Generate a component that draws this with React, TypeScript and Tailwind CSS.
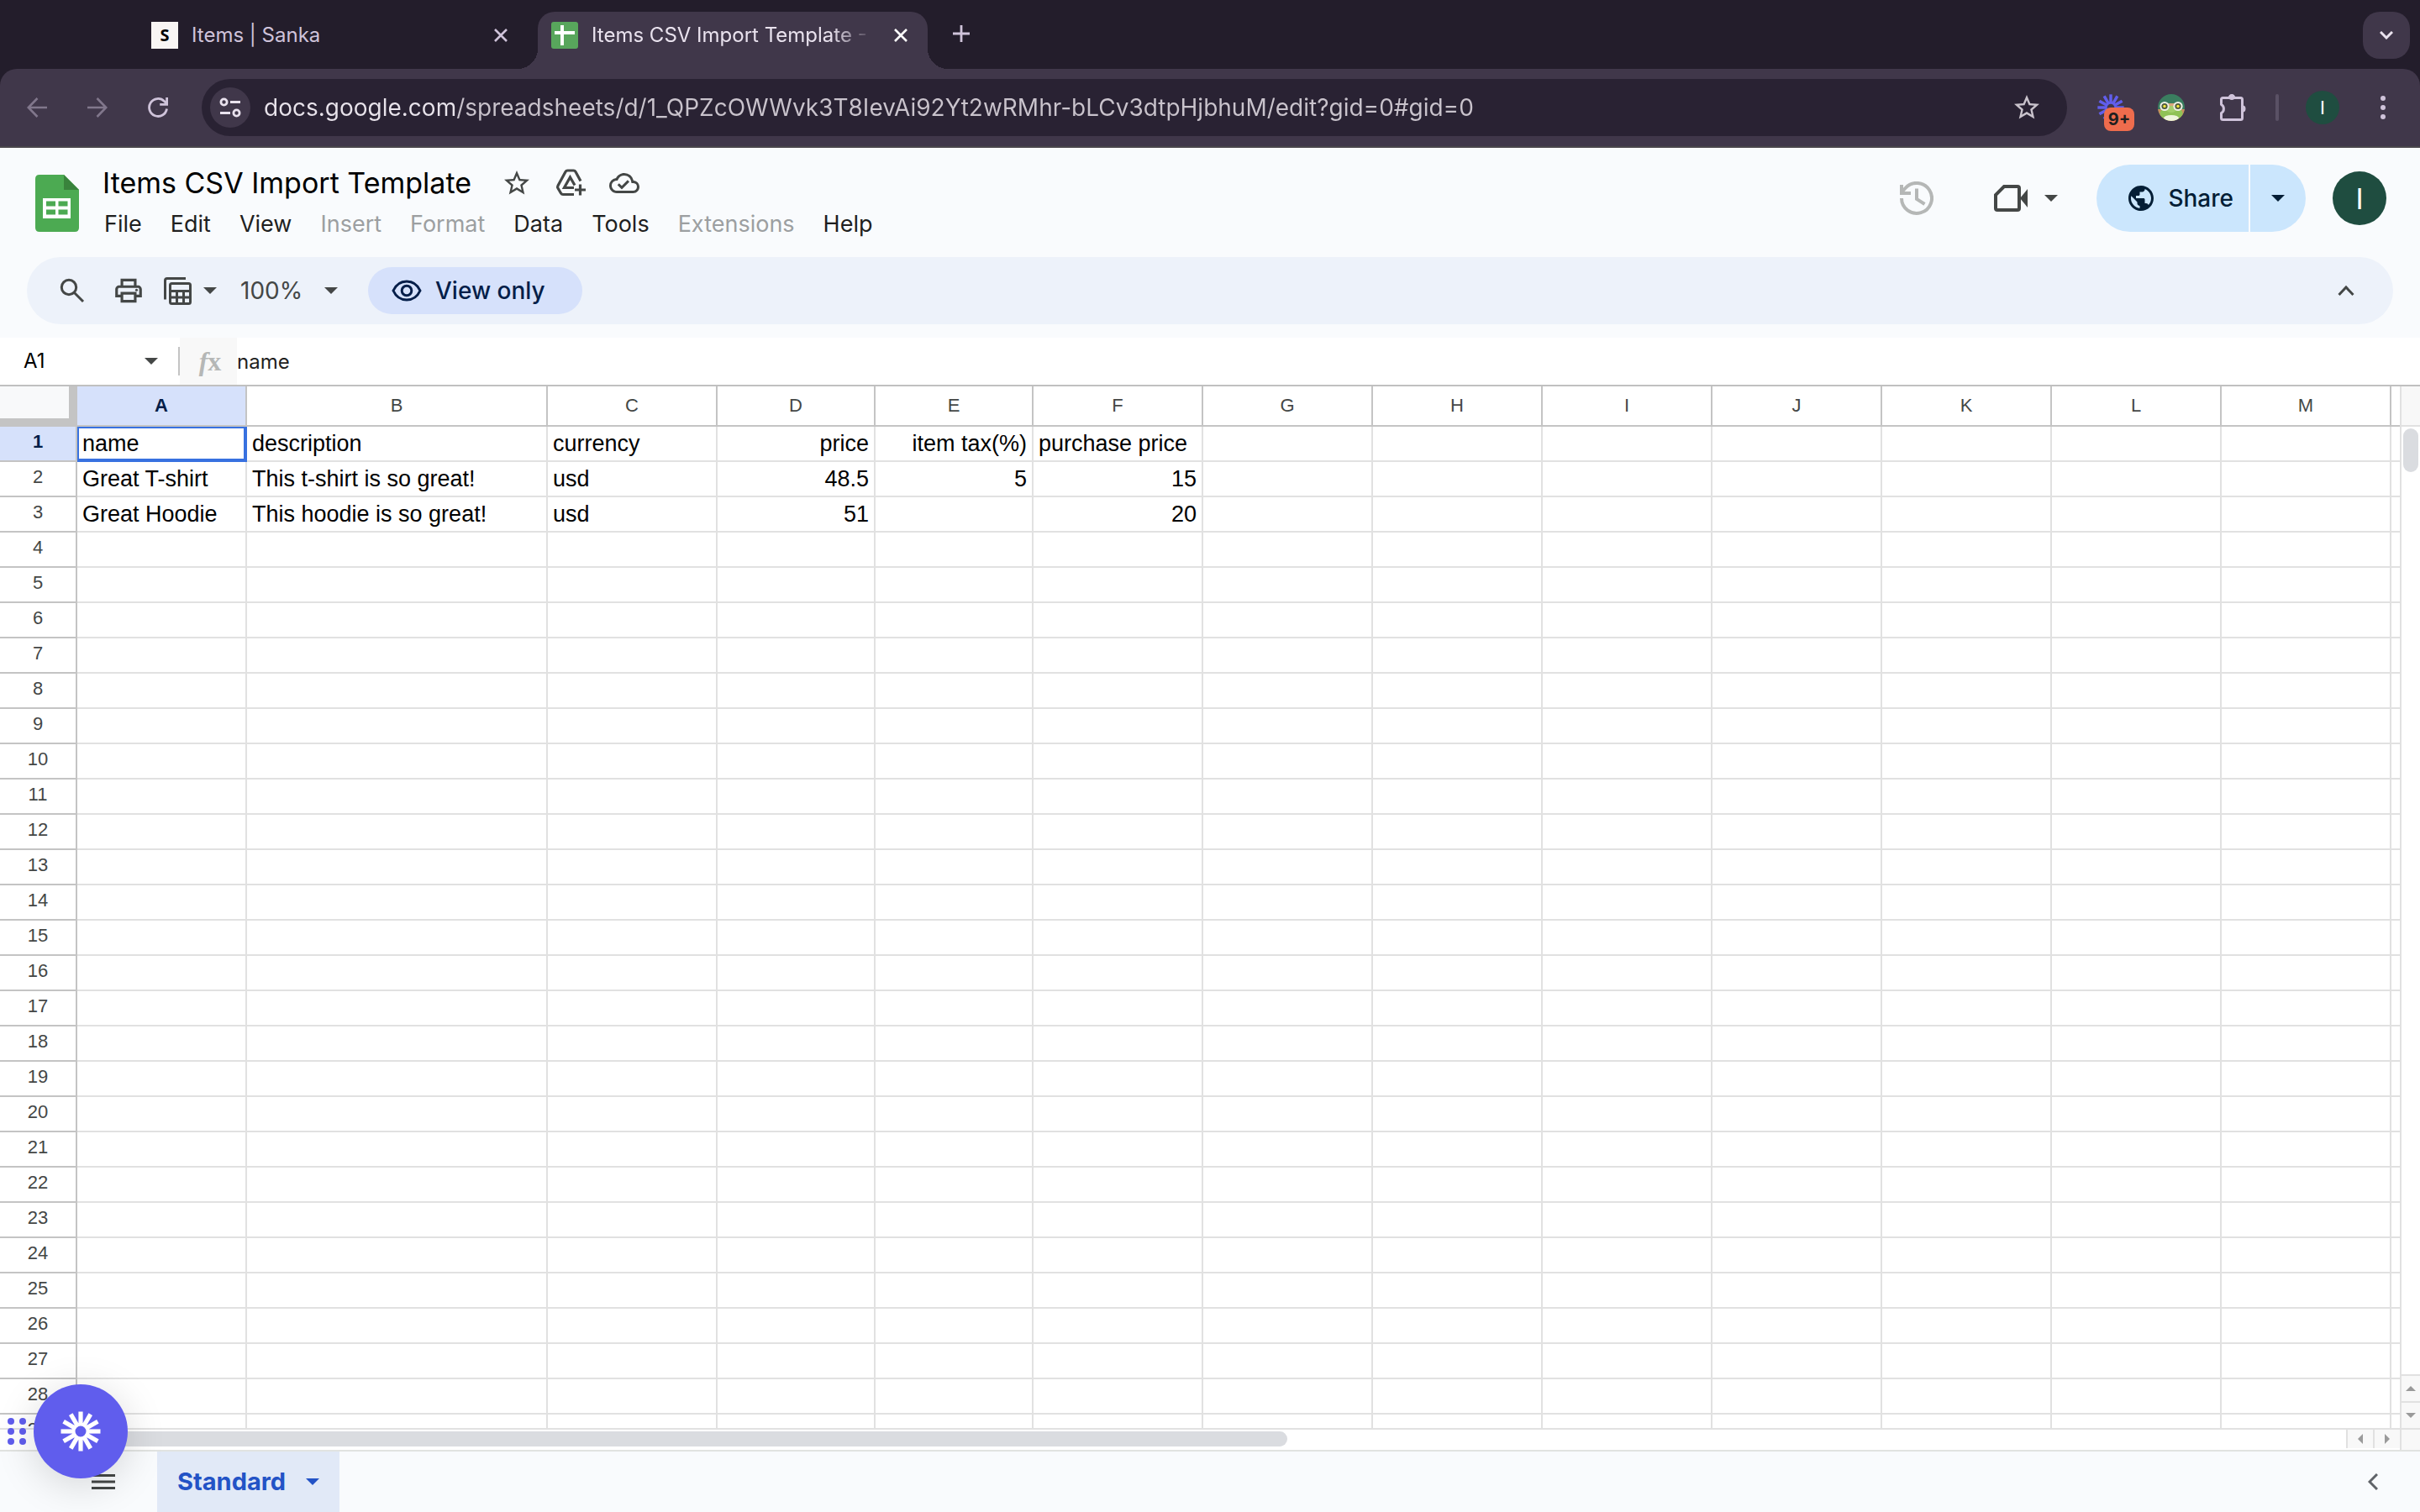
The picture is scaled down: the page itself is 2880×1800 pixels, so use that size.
import { useState, type ReactNode } from 'react'
import { clsx } from 'clsx'
import { MdStarBorder, MdOutlineCloudDone, MdOutlinePrint, MdPublic } from 'react-icons/md'

const COLUMNS = ['A', 'B', 'C', 'D', 'E', 'F', 'G', 'H', 'I', 'J', 'K', 'L', 'M']

const COLUMN_WIDTHS: Record<string, string> = {
  B: 'w-[358px]',
  D: 'w-[188px]',
  E: 'w-[188px]',
}

const ROW_COUNT = 29

const SHEET: string[][] = [
  ['name', 'description', 'currency', 'price', 'item tax(%)', 'purchase price'],
  ['Great T-shirt', 'This t-shirt is so great!', 'usd', '48.5', '5', '15'],
  ['Great Hoodie', 'This hoodie is so great!', 'usd', '51', '', '20'],
]

const MENUS = [
  { label: 'File' },
  { label: 'Edit' },
  { label: 'View' },
  { label: 'Insert', disabled: true },
  { label: 'Format', disabled: true },
  { label: 'Data' },
  { label: 'Tools' },
  { label: 'Extensions', disabled: true },
  { label: 'Help' },
]

const URL =
  'docs.google.com/spreadsheets/d/1_QPZcOWWvk3T8IevAi92Yt2wRMhr-bLCv3dtpHjbhuM/edit?gid=0#gid=0'

interface IconButtonProps {
  label: string
  children: ReactNode
  className?: string
}

function IconButton({ label, children, className }: IconButtonProps) {
  return (
    <button aria-label={label} className={clsx('flex shrink-0 items-center justify-center', className)}>
      {children}
    </button>
  )
}

function Caret({ className }: { className?: string }) {
  return (
    <svg viewBox="0 0 16 8" className={clsx('shrink-0', className ?? 'h-2 w-4')} fill="currentColor">
      <path d="M0 0h16L8 8z" />
    </svg>
  )
}

function CloseIcon() {
  return (
    <svg viewBox="0 0 16 16" className="size-4" fill="none" stroke="currentColor" strokeWidth="2.6">
      <path d="M1 1l14 14M15 1L1 15" />
    </svg>
  )
}

function Burst({ className }: { className?: string }) {
  return (
    <svg viewBox="-24 -24 48 48" className={className} stroke="currentColor" strokeWidth="5.2" fill="none">
      {[0, 30, 60, 90, 120, 150, 180, 210, 240, 270, 300, 330].map((deg) => (
        <path key={deg} d="M0 -8V-23.5" transform={`rotate(${deg})`} />
      ))}
      <circle r="8.500" strokeWidth="4" />
    </svg>
  )
}

function Frog() {
  return (
    <svg viewBox="0 0 32 32" className="size-8">
      <defs>
        <clipPath id="frog-clip">
          <circle cx="16" cy="16" r="16" />
        </clipPath>
      </defs>
      <g clipPath="url(#frog-clip)">
        <rect width="32" height="32" fill="#3a7d5f" />
        <rect y="18" width="32" height="14" fill="#c98d5c" />
        <rect x="9" y="11" width="14" height="8" fill="#d9a77c" />
        <ellipse cx="16" cy="23" rx="13.5" ry="8" fill="#8fc256" />
        <ellipse cx="16" cy="18" rx="6" ry="4" fill="#a3cf6c" />
        <ellipse cx="16" cy="28.500" rx="9" ry="3.500" fill="#eef5dd" />
        <circle cx="8" cy="14.500" r="5.600" fill="#eef0e6" />
        <circle cx="24" cy="14.500" r="5.600" fill="#eef0e6" />
        <circle cx="8" cy="14.500" r="3.600" fill="#4f5a3d" />
        <circle cx="24" cy="14.500" r="3.600" fill="#4f5a3d" />
        <circle cx="8" cy="14.500" r="1.700" fill="#f1e63c" />
        <circle cx="24" cy="14.500" r="1.700" fill="#f1e63c" />
      </g>
    </svg>
  )
}

function TabStrip() {
  return (
    <div className="flex h-[82px] shrink-0 items-end bg-[#231d2b] pr-3 pl-[180px] text-[24px] text-[#cfc3da]">
      <div className="flex h-[68px] w-[460px] shrink-0 items-start pt-3 pr-9">
        <span className="flex size-8 shrink-0 items-center justify-center bg-[#f8f5f4] font-['Noto_Sans',sans-serif] text-[20px] font-bold text-black">
          S
        </span>
        <a href="#items" className="ml-4 grow leading-8">
          Items | Sanka
        </a>
        <IconButton label="Close tab" className="-mr-2 size-8">
          <CloseIcon />
        </IconButton>
      </div>

      {/* Active tab with flared bottom corners */}
      <div className="relative flex h-[68px] w-[464px] shrink-0 items-start rounded-t-[20px] bg-[#40374a] px-4 pt-3 text-[#e9e2ee]">
        <span className="absolute bottom-0 -left-6 size-6 bg-[radial-gradient(circle_at_0_0,#231d2b_24px,#40374a_24px)]" />
        <span className="absolute -right-6 bottom-0 size-6 bg-[radial-gradient(circle_at_100%_0,#231d2b_24px,#40374a_24px)]" />
        <svg viewBox="0 0 32 32" className="size-8 shrink-0">
          <rect width="32" height="32" rx="3" fill="#58a65c" />
          <path d="M4 13h24M13 4v24" stroke="#fff" strokeWidth="4" />
        </svg>
        <a
          href="#sheet"
          className="ml-4 w-[340px] overflow-hidden leading-8 whitespace-nowrap [mask-image:linear-gradient(to_right,#000_285px,transparent_335px)]"
        >
          Items CSV Import Template - Google Sheets
        </a>
        <IconButton label="Close tab" className="ml-3 size-8 text-white">
          <CloseIcon />
        </IconButton>
      </div>

      <IconButton label="New tab" className="mb-[22px] ml-5 size-10">
        <svg viewBox="0 0 20 20" className="size-5" stroke="currentColor" strokeWidth="2.800">
          <path d="M0 10h20M10 0v20" />
        </svg>
      </IconButton>
      <div className="grow" />
      <IconButton label="Search tabs" className="mb-3 size-14 rounded-[20px] bg-[#40374a] text-[#e9e2ee]">
        <svg viewBox="0 0 16 10" className="h-[10px] w-4" fill="none" stroke="currentColor" strokeWidth="3">
          <path d="M1 1l7 7 7-7" />
        </svg>
      </IconButton>
    </div>
  )
}

function AddressBar() {
  return (
    <div className="shrink-0 bg-[#231d2b]">
      <div className="flex h-[94px] items-center rounded-t-[20px] border-b-2 border-[#4a464c] bg-[#40374a] px-6 text-[#cfc3da]">
        <IconButton label="Back" className="size-10 text-[#81778c]">
          <svg viewBox="0 0 24 24" className="size-6" fill="none" stroke="currentColor" strokeWidth="2.600">
            <path d="M24 12H2M12.500 1L1.800 12l10.700 11" />
          </svg>
        </IconButton>
        <IconButton label="Forward" className="ml-8 size-10 text-[#81778c]">
          <svg viewBox="0 0 24 24" className="size-6" fill="none" stroke="currentColor" strokeWidth="2.600">
            <path d="M0 12h22M11.500 1l10.700 11-10.700 11" />
          </svg>
        </IconButton>
        <IconButton label="Reload" className="ml-8 size-10">
          <svg viewBox="0 0 24 24" className="size-6" fill="none" stroke="currentColor" strokeWidth="2.800">
            <path d="M22.500 13.500A10.500 10.500 0 1 1 19.500 4.500L22 7M22.600 0v8.400h-8.400" />
          </svg>
        </IconButton>

        <div className="ml-8 flex h-[68px] grow items-center rounded-full bg-[#292233] pr-7 pl-[10px]">
          <IconButton label="View site information" className="size-12 rounded-full bg-[#40374a] text-[#e9e2ee]">
            <svg viewBox="0 0 26 24" className="h-6 w-[26px]" fill="none" stroke="currentColor" strokeWidth="2.800">
              <circle cx="5.500" cy="5.500" r="3.600" />
              <path d="M13 5.500h12M1 18.500h12" />
              <circle cx="20.500" cy="18.500" r="3.600" />
            </svg>
          </IconButton>
          <input
            aria-label="Address"
            defaultValue={URL}
            className="ml-4 min-w-0 grow bg-[linear-gradient(to_right,#e8e3eb_228px,#c9c3cc_228px)] bg-clip-text text-[28px] text-transparent outline-none"
          />
          <IconButton label="Bookmark" className="size-10 text-[#c9c3cc]">
            <MdStarBorder className="size-9" />
          </IconButton>
        </div>

        <button aria-label="Recorder" className="relative ml-9 size-8 text-[#615eec]">
          <Burst className="size-8" />
          <span className="absolute top-4 left-2 flex h-7 w-9 items-center justify-center rounded-lg bg-[#ee6c4d] text-[20px] font-bold text-[#1f1f1f]">
            9+
          </span>
        </button>
        <IconButton label="Frog" className="ml-10 size-8">
          <Frog />
        </IconButton>
        <IconButton label="Extensions" className="ml-[38px] size-9">
          <svg viewBox="0 0 36 36" className="size-9" fill="none" stroke="currentColor" strokeWidth="3">
            <path d="M5.500 8.500q0-2 2-2h21q2 0 2 2v22q0 2-2 2h-21q-2 0-2-2v-6a5 5.500 0 0 0 0-10z" strokeLinejoin="round" />
            <path d="M14 6a4 3.500 0 0 1 8 0zM31 15.500a3.500 4 0 0 1 0 8z" fill="currentColor" stroke="none" />
            <circle cx="18" cy="5.500" r="3.500" fill="currentColor" stroke="none" />
          </svg>
        </IconButton>
        <span className="ml-[34px] h-8 w-1 rounded-full bg-[#5a5165]" />
        <button className="ml-8 size-10 rounded-full bg-[#1f4d40] text-[22px] text-white">I</button>
        <IconButton label="Chrome menu" className="ml-8 size-10">
          <svg viewBox="0 0 6 28" className="h-7 w-[6px]" fill="currentColor">
            <circle cx="3" cy="3" r="3" />
            <circle cx="3" cy="14" r="3" />
            <circle cx="3" cy="25" r="3" />
          </svg>
        </IconButton>
      </div>
    </div>
  )
}

function DocHeader() {
  return (
    <header className="flex h-[130px] shrink-0 items-start pt-[14px] pr-10 pl-[42px] text-[#444746]">
      <svg viewBox="0 0 52 68" className="mt-[18px] h-[68px] w-[52px] shrink-0">
        <path d="M5 0h29l18 18v45q0 5-5 5H5q-5 0-5-5V5q0-5 5-5z" fill="#4caa52" />
        <path d="M34 0l18 18H34z" fill="#39833c" />
        <path d="M9 28h33v24H9z" fill="#fff" />
        <path d="M13 31.500h11v6H13zM27.500 31.500h11v6h-11zM13 41.500h11v6H13zM27.500 41.500h11v6h-11z" fill="#4caa52" />
      </svg>

      <div className="ml-7">
        <div className="flex h-14 items-center">
          <h1 className="text-[34px] leading-[44px] text-black">Items CSV Import Template</h1>
          <IconButton label="Star" className="ml-9 size-9">
            <MdStarBorder className="size-9" />
          </IconButton>
          <IconButton label="Add to Drive" className="ml-7 size-9">
            <svg viewBox="0 0 36 36" className="size-9" fill="none" stroke="currentColor" strokeWidth="3.200">
              <path d="M30 15.500L24 4.500q-.8-1.500-2.500-1.500h-7q-1.700 0-2.500 1.500L3 21q-.8 1.500 0 3l3.500 6q.9 1.500 2.500 1.500h13" />
              <path d="M22 23.500H10.500L17.500 11l5.500 9.500" />
              <path d="M29.500 19.500v13M23 26h13" />
            </svg>
          </IconButton>
          <IconButton label="See document status" className="ml-7 size-9">
            <MdOutlineCloudDone className="size-9" />
          </IconButton>
        </div>
        <nav className="flex h-[42px] items-center gap-[34px] pl-[2px] text-[27px] text-[#1f1f1f]">
          {MENUS.map((menu) => (
            <button key={menu.label} disabled={menu.disabled} className="disabled:text-[#9c9fa1]">
              {menu.label}
            </button>
          ))}
        </nav>
      </div>

      <div className="mt-[6px] ml-auto flex h-20 items-center">
        <IconButton label="Version history" className="size-10 text-[#b5b7b6]">
          <svg viewBox="0 0 40 40" className="size-10" fill="none" stroke="currentColor" strokeWidth="4">
            <path d="M2 20a18 18 0 1 0 4.500-12L2 13M2 4v10h11" />
            <path d="M20 8.500v12.500l9.500 6" />
          </svg>
        </IconButton>
        <button aria-label="Join a call" className="ml-[72px] flex items-center gap-5">
          <svg viewBox="0 0 40 32" className="h-8 w-10">
            <path d="M12 2h16q2 0 2 2v24q0 2-2 2H4q-2 0-2-2V12z" fill="none" stroke="currentColor" strokeWidth="4" />
            <path d="M31 16l9-11v22z" fill="currentColor" />
          </svg>
          <Caret />
        </button>
        <div className="ml-[46px] flex h-20 gap-[2px] text-[#041e36]">
          <button className="flex items-center gap-[14px] rounded-l-full bg-[#cbe6fd] pr-[18px] pl-[35px] text-[28px] font-medium">
            <MdPublic className="size-9" />
            Share
          </button>
          <IconButton label="Quick sharing actions" className="w-[66px] rounded-r-full bg-[#cbe6fd]">
            <Caret />
          </IconButton>
        </div>
        <button className="ml-8 size-16 rounded-full bg-[#1f4d40] text-[34px] text-white">I</button>
      </div>
    </header>
  )
}

function Toolbar() {
  return (
    <div className="mx-8 flex h-20 shrink-0 items-center rounded-full bg-[#edf2fa] pr-11 pl-[38px] text-[#444746]">
      <IconButton label="Search the menus" className="size-8">
        <svg viewBox="0 0 32 32" className="size-8" fill="none" stroke="currentColor" strokeWidth="3">
          <circle cx="12" cy="12" r="8.700" />
          <path d="M18.500 18.500L29 29" />
        </svg>
      </IconButton>
      <IconButton label="Print" className="ml-8 size-[38px]">
        <MdOutlinePrint className="size-[38px]" />
      </IconButton>
      <button aria-label="Filter views" className="ml-[22px] flex items-center gap-[14px]">
        <svg viewBox="0 0 34 34" className="size-[34px]" fill="none" stroke="currentColor" strokeWidth="3">
          <path d="M2.500 27.500V5q0-2.500 2.500-2.500h22" />
          <rect x="8.500" y="8.500" width="24" height="24" rx="2" />
          <path d="M8 17.500h24M8 25h24M16.500 17.500v15M24.500 17.500v15" />
        </svg>
        <Caret />
      </button>
      <div className="ml-7 flex items-center">
        <input aria-label="Zoom" defaultValue="100%" className="w-[100px] bg-transparent text-[28px] outline-none" />
        <IconButton label="Zoom levels">
          <Caret />
        </IconButton>
      </div>
      <button className="ml-9 flex h-14 items-center gap-4 rounded-full bg-[#d6e1fb] pr-11 pl-7 text-[28px] font-medium text-[#041e49]">
        <svg viewBox="0 0 36 26" className="h-[26px] w-9" fill="none" stroke="currentColor" strokeWidth="3">
          <path d="M2 13Q7 2 18 2t16 11q-5 11-16 11T2 13z" />
          <circle cx="18" cy="13" r="5.800" />
        </svg>
        View only
      </button>
      <IconButton label="Hide the menus" className="ml-auto size-6">
        <svg viewBox="0 0 20 14" className="h-[14px] w-5" fill="none" stroke="currentColor" strokeWidth="3">
          <path d="M1.500 12L10 3l8.500 9" />
        </svg>
      </IconButton>
    </div>
  )
}

function FormulaBar({ value }: { value: string }) {
  return (
    <div className="mt-4 flex h-[58px] shrink-0 items-center border-b-2 border-[#c0c0c0] bg-white text-[24px] text-black">
      <input aria-label="Name box" defaultValue="A1" className="w-[172px] pl-7 outline-none" />
      <IconButton label="Named ranges" className="text-[#444746]">
        <Caret />
      </IconButton>
      <span className="ml-6 h-[34px] w-[2px] bg-[#c4c4c4]" />
      <span className="flex h-full w-[68px] items-center justify-center bg-[#f8f8f8] pl-1 font-['Liberation_Serif',serif] text-[32px] font-bold text-[#b5b7b6]">
        <i>f</i>x
      </span>
      <input
        aria-label="Formula"
        value={value}
        readOnly
        className="h-full grow text-[#1f1f1f] outline-none"
      />
    </div>
  )
}

function Grid() {
  return (
    <div className="flex min-h-0 grow bg-white">
      <div className="flex min-w-0 grow flex-col">
        <div className="min-h-0 grow overflow-hidden">
          <table className="w-full table-fixed border-separate border-spacing-0 font-['Liberation_Sans',sans-serif] text-[27px] leading-[30px] text-black">
            <thead className="text-[22px] text-[#444746]">
              <tr className="h-12">
                <th className="w-[92px] border-r-[10px] border-b-[10px] border-[#c4c4c4] bg-[#f8f9fa]" />
                {COLUMNS.map((col) => (
                  <th
                    key={col}
                    scope="col"
                    className={clsx(
                      'border-r-2 border-b-2 border-[#c4c4c4]',
                      COLUMN_WIDTHS[col] ?? 'w-[202px]',
                      col === 'A' ? 'bg-[#d6e1fb] font-bold text-[#041e49]' : 'font-normal',
                    )}
                  >
                    {col}
                  </th>
                ))}
                <th className="border-b-2 border-[#c4c4c4]" />
              </tr>
            </thead>
            <tbody>
              {Array.from({ length: ROW_COUNT }, (_, row) => (
                <tr key={row} className="h-[42px]">
                  <th
                    scope="row"
                    className={clsx(
                      'border-r-2 border-b-2 border-[#c4c4c4] pb-1 text-[22px]',
                      row === 0 ? 'bg-[#d6e1fb] font-bold text-[#041e49]' : 'font-normal text-[#444746]',
                    )}
                  >
                    {row + 1}
                  </th>
                  {COLUMNS.map((col, i) => {
                    const value = SHEET[row]?.[i] ?? ''
                    const alignRight = col === 'D' || col === 'E' || (col === 'F' && row > 0)
                    return (
                      <td
                        key={col}
                        className={clsx(
                          'relative border-r-2 border-b-2 border-[#e1e1e1] px-[6px] whitespace-nowrap',
                          alignRight && 'text-right',
                        )}
                      >
                        {value}
                        {row === 0 && i === 0 && (
                          <span className="absolute inset-0 -right-[2px] -bottom-[2px] border-2 border-r-4 border-b-4 border-[#3871e0]" />
                        )}
                      </td>
                    )
                  })}
                  <td className="border-b-2 border-[#e1e1e1]" />
                </tr>
              ))}
            </tbody>
          </table>
        </div>

        {/* Horizontal scrollbar */}
        <div className="flex h-[26px] shrink-0 border-t-2 border-[#e1e1e1] pl-[92px] text-[#9a9a9a]">
          <div className="grow pt-[2px]">
            <div className="h-[18px] w-8/15 rounded-full bg-[#dadce0]" />
          </div>
          <IconButton label="Scroll left" className="mb-[2px] w-8 border-l-2 border-[#e1e1e1] bg-[#f8f8f8]">
            <Caret className="h-[6px] w-3 rotate-90" />
          </IconButton>
          <IconButton label="Scroll right" className="mb-[2px] w-8 border-l-2 border-[#e1e1e1] bg-[#f8f8f8]">
            <Caret className="h-[6px] w-3 -rotate-90" />
          </IconButton>
        </div>
      </div>

      {/* Vertical scrollbar */}
      <div className="flex w-6 shrink-0 flex-col border-l-2 border-[#e1e1e1] text-[#9a9a9a]">
        <div className="h-12 border-b-2 border-[#e1e1e1] bg-[#f8f8f8]" />
        <div className="grow pt-[2px] pl-[2px]">
          <div className="h-[52px] w-[18px] rounded-full bg-[#dadce0]" />
        </div>
        <IconButton label="Scroll up" className="h-8 border-t-2 border-[#e1e1e1] bg-[#f8f8f8]">
          <Caret className="h-[6px] w-3 rotate-180" />
        </IconButton>
        <IconButton label="Scroll down" className="h-8 border-t-2 border-[#e1e1e1] bg-[#f8f8f8]">
          <Caret className="h-[6px] w-3" />
        </IconButton>
        <div className="h-[26px] border-t-2 border-[#e1e1e1] bg-[#f8f8f8]" />
      </div>
    </div>
  )
}

function SheetTabs() {
  return (
    <footer className="flex h-[74px] shrink-0 items-center border-t-2 border-[#e1e3e1] pr-[50px] pl-[109px]">
      <IconButton label="All sheets" className="text-[#444746]">
        <svg viewBox="0 0 28 18" className="h-[18px] w-7" stroke="currentColor" strokeWidth="3">
          <path d="M0 1.500h28M0 9h28M0 16.500h28" />
        </svg>
      </IconButton>
      <button className="ml-[50px] flex h-full items-center gap-6 bg-[#e1e9f7] px-6 text-[29px] font-bold text-[#2353c6]">
        Standard
        <Caret />
      </button>
      <IconButton label="Show side panel" className="ml-auto text-[#5f6368]">
        <svg viewBox="0 0 12 20" className="h-5 w-3" fill="none" stroke="currentColor" strokeWidth="3">
          <path d="M11 1l-9 9 9 9" />
        </svg>
      </IconButton>
    </footer>
  )
}

// Floating launcher, stays above the grid in the lower left corner
function RecorderBubble() {
  return (
    <div className="fixed bottom-10 left-2 flex items-center gap-2 text-[#605ded]">
      <svg viewBox="0 0 24 32" className="h-8 w-6 shrink-0" fill="currentColor">
        {[4, 16, 28].map((y) => (
          <g key={y}>
            <circle cx="5" cy={y} r="4" />
            <circle cx="19" cy={y} r="4" />
          </g>
        ))}
      </svg>
      <button
        aria-label="Start recording"
        className="flex size-28 items-center justify-center rounded-full bg-[#605ded] text-white shadow-[0_8px_48px_rgba(0,0,0,0.15)]"
      >
        <Burst className="size-12" />
      </button>
    </div>
  )
}

export default function App() {
  const [formula] = useState(SHEET[0][0])

  return (
    <div className="flex h-screen flex-col overflow-hidden bg-[#f9fbfd] font-['Inter',sans-serif]">
      <TabStrip />
      <AddressBar />
      <DocHeader />
      <Toolbar />
      <FormulaBar value={formula} />
      <Grid />
      <SheetTabs />
      <RecorderBubble />
    </div>
  )
}
